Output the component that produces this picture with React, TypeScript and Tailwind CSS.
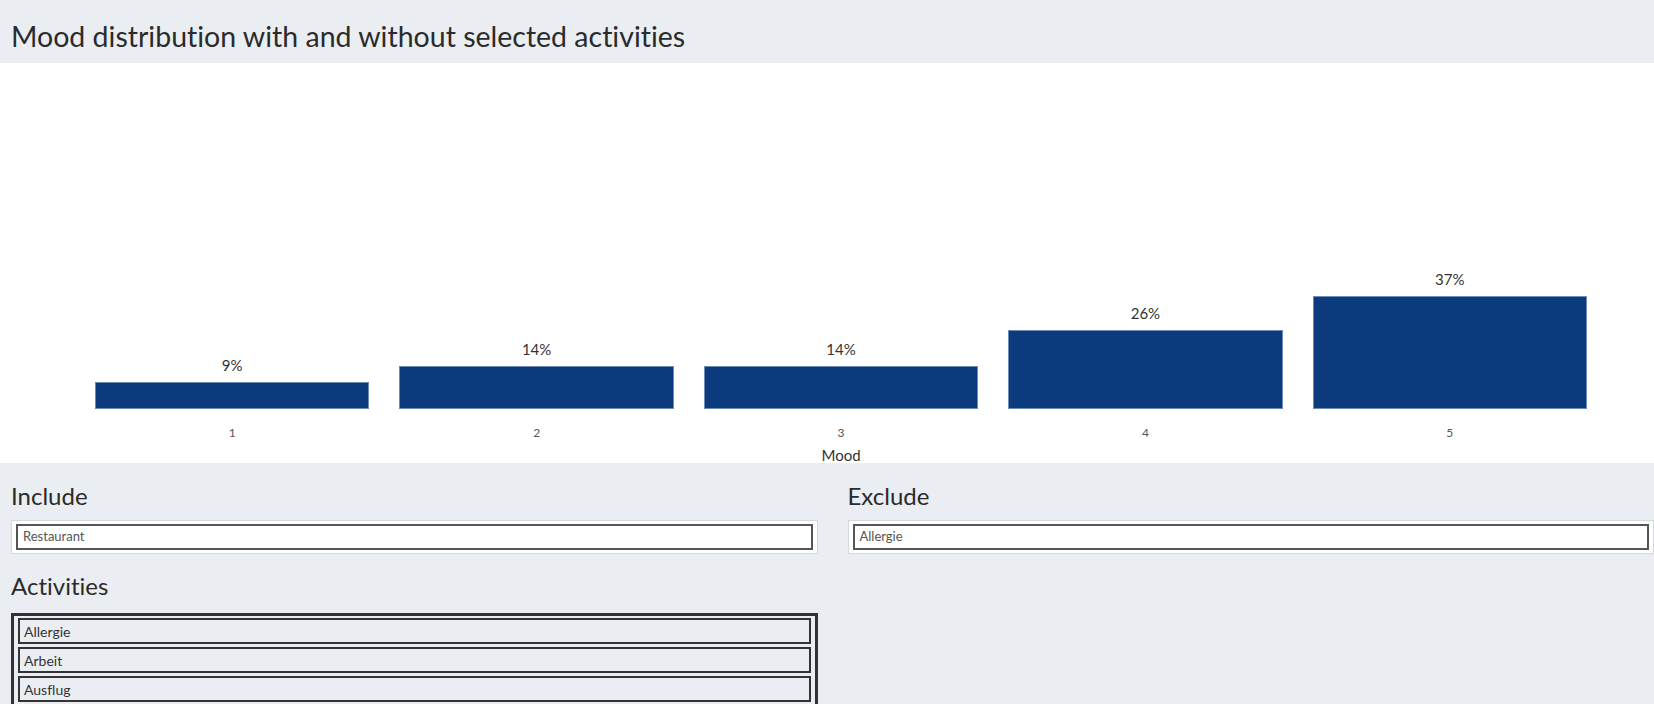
import React from 'react';

const moods = [
    { label: "1", pct: 9 },
    { label: "2", pct: 14 },
    { label: "3", pct: 14 },
    { label: "4", pct: 26 },
    { label: "5", pct: 37 },
];

const activities = ["Allergie", "Arbeit", "Ausflug"];

const font = { fontFamily: 'Lato, "Open Sans", sans-serif' };

const SelectBox = ({ value }: { value: string }) => (
    <div className="border border-[#d3d8e0] bg-white px-[4px] py-[3px]">
        <div className="h-[26px] border-2 border-[#555555] flex items-center pl-[5px] text-[13px] text-[#555555]">
            {value}
        </div>
    </div>
);

export default function App() {
    return (
        <div className="min-h-screen bg-[#eaeef3] text-[#333333] [font-variant-ligatures:none]" style={font}>
            <div className="h-[63px] flex items-center px-[11px] pt-[10px]">
                <h1 className="text-[28.5px] leading-none text-[#2b2b2b]">Mood distribution with and without selected activities</h1>
            </div>

            <div className="bg-white h-[400px] flex flex-col">
                <div className="h-[346px] flex items-end pl-[80px] pr-[52px]">
                    {moods.map((m) => (
                        <div key={m.label} className="flex-1 px-[15px] flex flex-col items-stretch justify-end">
                            <p className="text-[15px] leading-[16px] text-center mb-[9px] text-[#333333]">{m.pct}%</p>
                            <div className="bg-[#0b3b7d] border border-[#6f8cb8]" style={{ height: m.pct * 3.05 }} />
                        </div>
                    ))}
                </div>
                <div className="flex pl-[80px] pr-[52px] pt-[17px]">
                    {moods.map((m) => (
                        <p key={m.label} className="flex-1 text-center text-[12px] leading-[14px] text-[#555555]">{m.label}</p>
                    ))}
                </div>
                <div className="flex pl-[80px] pr-[52px] mt-[7px]">
                    <p className="flex-1 text-center text-[15px] leading-[16px] text-[#333333]">Mood</p>
                </div>
            </div>

            <div className="grid grid-cols-2 gap-[30px] pl-[11px] pt-[21px]">
                <div>
                    <h2 className="text-[24px] leading-[24px] mb-[12px] text-[#2b2b2b]">Include</h2>
                    <SelectBox value="Restaurant" />
                    <h2 className="text-[24px] leading-[24px] mt-[20px] mb-[15px] text-[#2b2b2b]">Activities</h2>
                    <div className="border-[3px] border-[#333333] px-[4px] pt-[2px] pb-[2px] flex flex-col gap-[3px]">
                        {activities.map((a) => (
                            <div key={a} className="h-[26px] border-2 border-[#333333] flex items-center pl-[4px] text-[14px] text-[#333333]">
                                {a}
                            </div>
                        ))}
                    </div>
                </div>
                <div>
                    <h2 className="text-[24px] leading-[24px] mb-[12px] text-[#2b2b2b]">Exclude</h2>
                    <SelectBox value="Allergie" />
                </div>
            </div>
        </div>
    );
}
